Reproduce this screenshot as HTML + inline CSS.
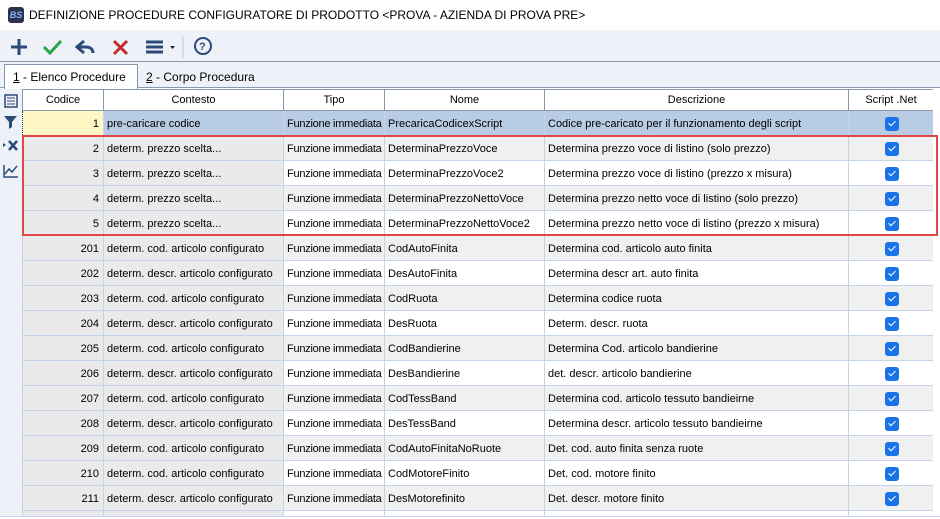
<!DOCTYPE html><html><head><meta charset="utf-8"><style>
*{margin:0;padding:0;box-sizing:border-box}
html,body{width:940px;height:519px;overflow:hidden}
body{background:#fff;font-family:"Liberation Sans",sans-serif;font-size:11px;color:#000;position:relative}
.title{position:absolute;left:0;top:0;width:940px;height:30px;background:#fff}
.title span{position:absolute;left:29px;top:8px;font-size:12px}
.logo{position:absolute;left:8px;top:7px;width:16px;height:16px;border-radius:3px;background:#2b3350;color:#8fb0ff;font-size:9px;font-weight:bold;font-style:italic;text-align:center;line-height:16px}
.tb{position:absolute;left:0;top:30px;width:940px;height:58px;background:#eef2f8;border-bottom:1px solid #8898ad}
.tbl{position:absolute;left:0;top:61px;width:940px;height:1px;background:#8898ad}
.tab1{position:absolute;left:4px;top:64px;width:134px;height:25px;background:#fff;border:1px solid #8898ad;border-bottom:none;font-size:12px;padding:5px 0 0 8px}
.tab2{position:absolute;left:146px;top:70px;font-size:12px}
.side{position:absolute;left:0;top:89px;width:22px;height:430px;background:#eef2f8}
.wrap{position:absolute;left:22px;top:89px;width:911px;height:428px;overflow:hidden}
table{border-collapse:collapse;table-layout:fixed;width:911px}
td,th{height:25px;border:1px solid #c5d3e6;white-space:nowrap;overflow:hidden;padding:2px 2px 0 3px;font-weight:normal}
td:nth-child(3){letter-spacing:-0.25px}
th{height:21px;background:#fff;border-color:#8898ad;text-align:center;padding:0}
td.n{text-align:right;background:#eaeaea;padding-right:4px}
td.c{background:#eaeaea}
tr.g td{background:#f0f0f0}
tr.g td.n,tr.g td.c{background:#eaeaea}
tr.s td{background:#b8cce4}
tr.s td.n{background:#fff8c4;border:1px dotted #333}
.ck{display:block;margin:0 auto;width:14px;height:14px;border-radius:3px;background:#1a73e8;position:relative}
.ck:after{content:"";position:absolute;left:5px;top:2px;width:3px;height:6px;border:solid #fff;border-width:0 1.5px 1.5px 0;transform:rotate(45deg)}
.red{position:absolute;left:22px;top:135px;width:916px;height:101px;border:2px solid #e04848}
</style></head><body>
<div class="title"><div class="logo">BS</div><span>DEFINIZIONE PROCEDURE CONFIGURATORE DI PRODOTTO &lt;PROVA - AZIENDA DI PROVA PRE&gt;</span></div>
<div class="tb"></div><div class="tbl"></div>
<svg style="position:absolute;left:0;top:30px" width="230" height="32">
<path d="M19 9v16M11 17h16" stroke="#2c4a78" stroke-width="3"/>
<path d="M44 17l6 6 11-12" stroke="#27a645" stroke-width="3" fill="none"/>
<path d="M84 11l-7 6 7 6M78 17h8c5 0 7 3 7 6" stroke="#2c4a78" stroke-width="3" fill="none"/>
<path d="M114 11l13 13M127 11l-13 13" stroke="#c62b2b" stroke-width="3"/>
<path d="M146 12h17M146 17h17M146 22h17" stroke="#2c4a78" stroke-width="3"/>
<path d="M170 16h5l-2.5 3z" fill="#222"/>
<line x1="183" y1="6" x2="183" y2="28" stroke="#c0c8d4"/>
<circle cx="203" cy="16" r="8" stroke="#2c4a78" stroke-width="2" fill="none"/>
<text x="199" y="20" font-size="11" font-weight="bold" fill="#2c4a78" font-family="Liberation Sans">?</text>
</svg>
<div class="tab1"><u>1</u> - Elenco Procedure</div><div class="tab2"><u>2</u> - Corpo Procedura</div>
<div class="side"></div>
<svg style="position:absolute;left:0;top:89px" width="22" height="100">
<rect x="5" y="6" width="12" height="12" fill="none" stroke="#2c4a78" stroke-width="1.5"/><path d="M7 9h8M7 12h8M7 15h8" stroke="#2c4a78"/>
<path d="M4 27h13l-5 6v5l-3 2v-7z" fill="#2c4a78"/>
<path d="M9 52l8 9M17 52l-8 9" stroke="#2c4a78" stroke-width="2.5"/><path d="M3 54l3 2-3 2z" fill="#2c4a78"/>
<path d="M4 76v12h14M5 85l4-5 3 3 5-6" stroke="#2c4a78" stroke-width="1.5" fill="none"/>
</svg>
<div class="wrap"><table>
<colgroup><col width="81"><col width="180"><col width="101"><col width="160"><col width="304"><col width="85"></colgroup>
<tr><th>Codice</th><th>Contesto</th><th>Tipo</th><th>Nome</th><th>Descrizione</th><th>Script .Net</th></tr>
<tr class="s"><td class="n">1</td><td class="c">pre-caricare codice</td><td>Funzione immediata</td><td>PrecaricaCodicexScript</td><td>Codice pre-caricato per il funzionamento degli script</td><td><i class="ck"></i></td></tr>
<tr class="g"><td class="n">2</td><td class="c">determ. prezzo scelta...</td><td>Funzione immediata</td><td>DeterminaPrezzoVoce</td><td>Determina prezzo voce di listino (solo prezzo)</td><td><i class="ck"></i></td></tr>
<tr><td class="n">3</td><td class="c">determ. prezzo scelta...</td><td>Funzione immediata</td><td>DeterminaPrezzoVoce2</td><td>Determina prezzo voce di listino (prezzo x misura)</td><td><i class="ck"></i></td></tr>
<tr class="g"><td class="n">4</td><td class="c">determ. prezzo scelta...</td><td>Funzione immediata</td><td>DeterminaPrezzoNettoVoce</td><td>Determina prezzo netto voce di listino (solo prezzo)</td><td><i class="ck"></i></td></tr>
<tr><td class="n">5</td><td class="c">determ. prezzo scelta...</td><td>Funzione immediata</td><td>DeterminaPrezzoNettoVoce2</td><td>Determina prezzo netto voce di listino (prezzo x misura)</td><td><i class="ck"></i></td></tr>
<tr class="g"><td class="n">201</td><td class="c">determ. cod. articolo configurato</td><td>Funzione immediata</td><td>CodAutoFinita</td><td>Determina cod. articolo auto finita</td><td><i class="ck"></i></td></tr>
<tr><td class="n">202</td><td class="c">determ. descr. articolo configurato</td><td>Funzione immediata</td><td>DesAutoFinita</td><td>Determina descr art. auto finita</td><td><i class="ck"></i></td></tr>
<tr class="g"><td class="n">203</td><td class="c">determ. cod. articolo configurato</td><td>Funzione immediata</td><td>CodRuota</td><td>Determina codice ruota</td><td><i class="ck"></i></td></tr>
<tr><td class="n">204</td><td class="c">determ. descr. articolo configurato</td><td>Funzione immediata</td><td>DesRuota</td><td>Determ. descr. ruota</td><td><i class="ck"></i></td></tr>
<tr class="g"><td class="n">205</td><td class="c">determ. cod. articolo configurato</td><td>Funzione immediata</td><td>CodBandierine</td><td>Determina Cod. articolo bandierine</td><td><i class="ck"></i></td></tr>
<tr><td class="n">206</td><td class="c">determ. descr. articolo configurato</td><td>Funzione immediata</td><td>DesBandierine</td><td>det. descr. articolo bandierine</td><td><i class="ck"></i></td></tr>
<tr class="g"><td class="n">207</td><td class="c">determ. cod. articolo configurato</td><td>Funzione immediata</td><td>CodTessBand</td><td>Determina cod. articolo tessuto bandieirne</td><td><i class="ck"></i></td></tr>
<tr><td class="n">208</td><td class="c">determ. descr. articolo configurato</td><td>Funzione immediata</td><td>DesTessBand</td><td>Determina descr. articolo tessuto bandieirne</td><td><i class="ck"></i></td></tr>
<tr class="g"><td class="n">209</td><td class="c">determ. cod. articolo configurato</td><td>Funzione immediata</td><td>CodAutoFinitaNoRuote</td><td>Det. cod. auto finita senza ruote</td><td><i class="ck"></i></td></tr>
<tr><td class="n">210</td><td class="c">determ. cod. articolo configurato</td><td>Funzione immediata</td><td>CodMotoreFinito</td><td>Det. cod. motore finito</td><td><i class="ck"></i></td></tr>
<tr class="g"><td class="n">211</td><td class="c">determ. descr. articolo configurato</td><td>Funzione immediata</td><td>DesMotorefinito</td><td>Det. descr. motore finito</td><td><i class="ck"></i></td></tr>
<tr><td class="n"></td><td class="c"></td><td></td><td></td><td></td><td><i class="ck"></i></td></tr>
</table></div>
<div style="position:absolute;left:0;top:516px;width:940px;height:3px;background:#fff;border-top:1px solid #c5d3e6"></div>
<div class="red"></div>
</body></html>
